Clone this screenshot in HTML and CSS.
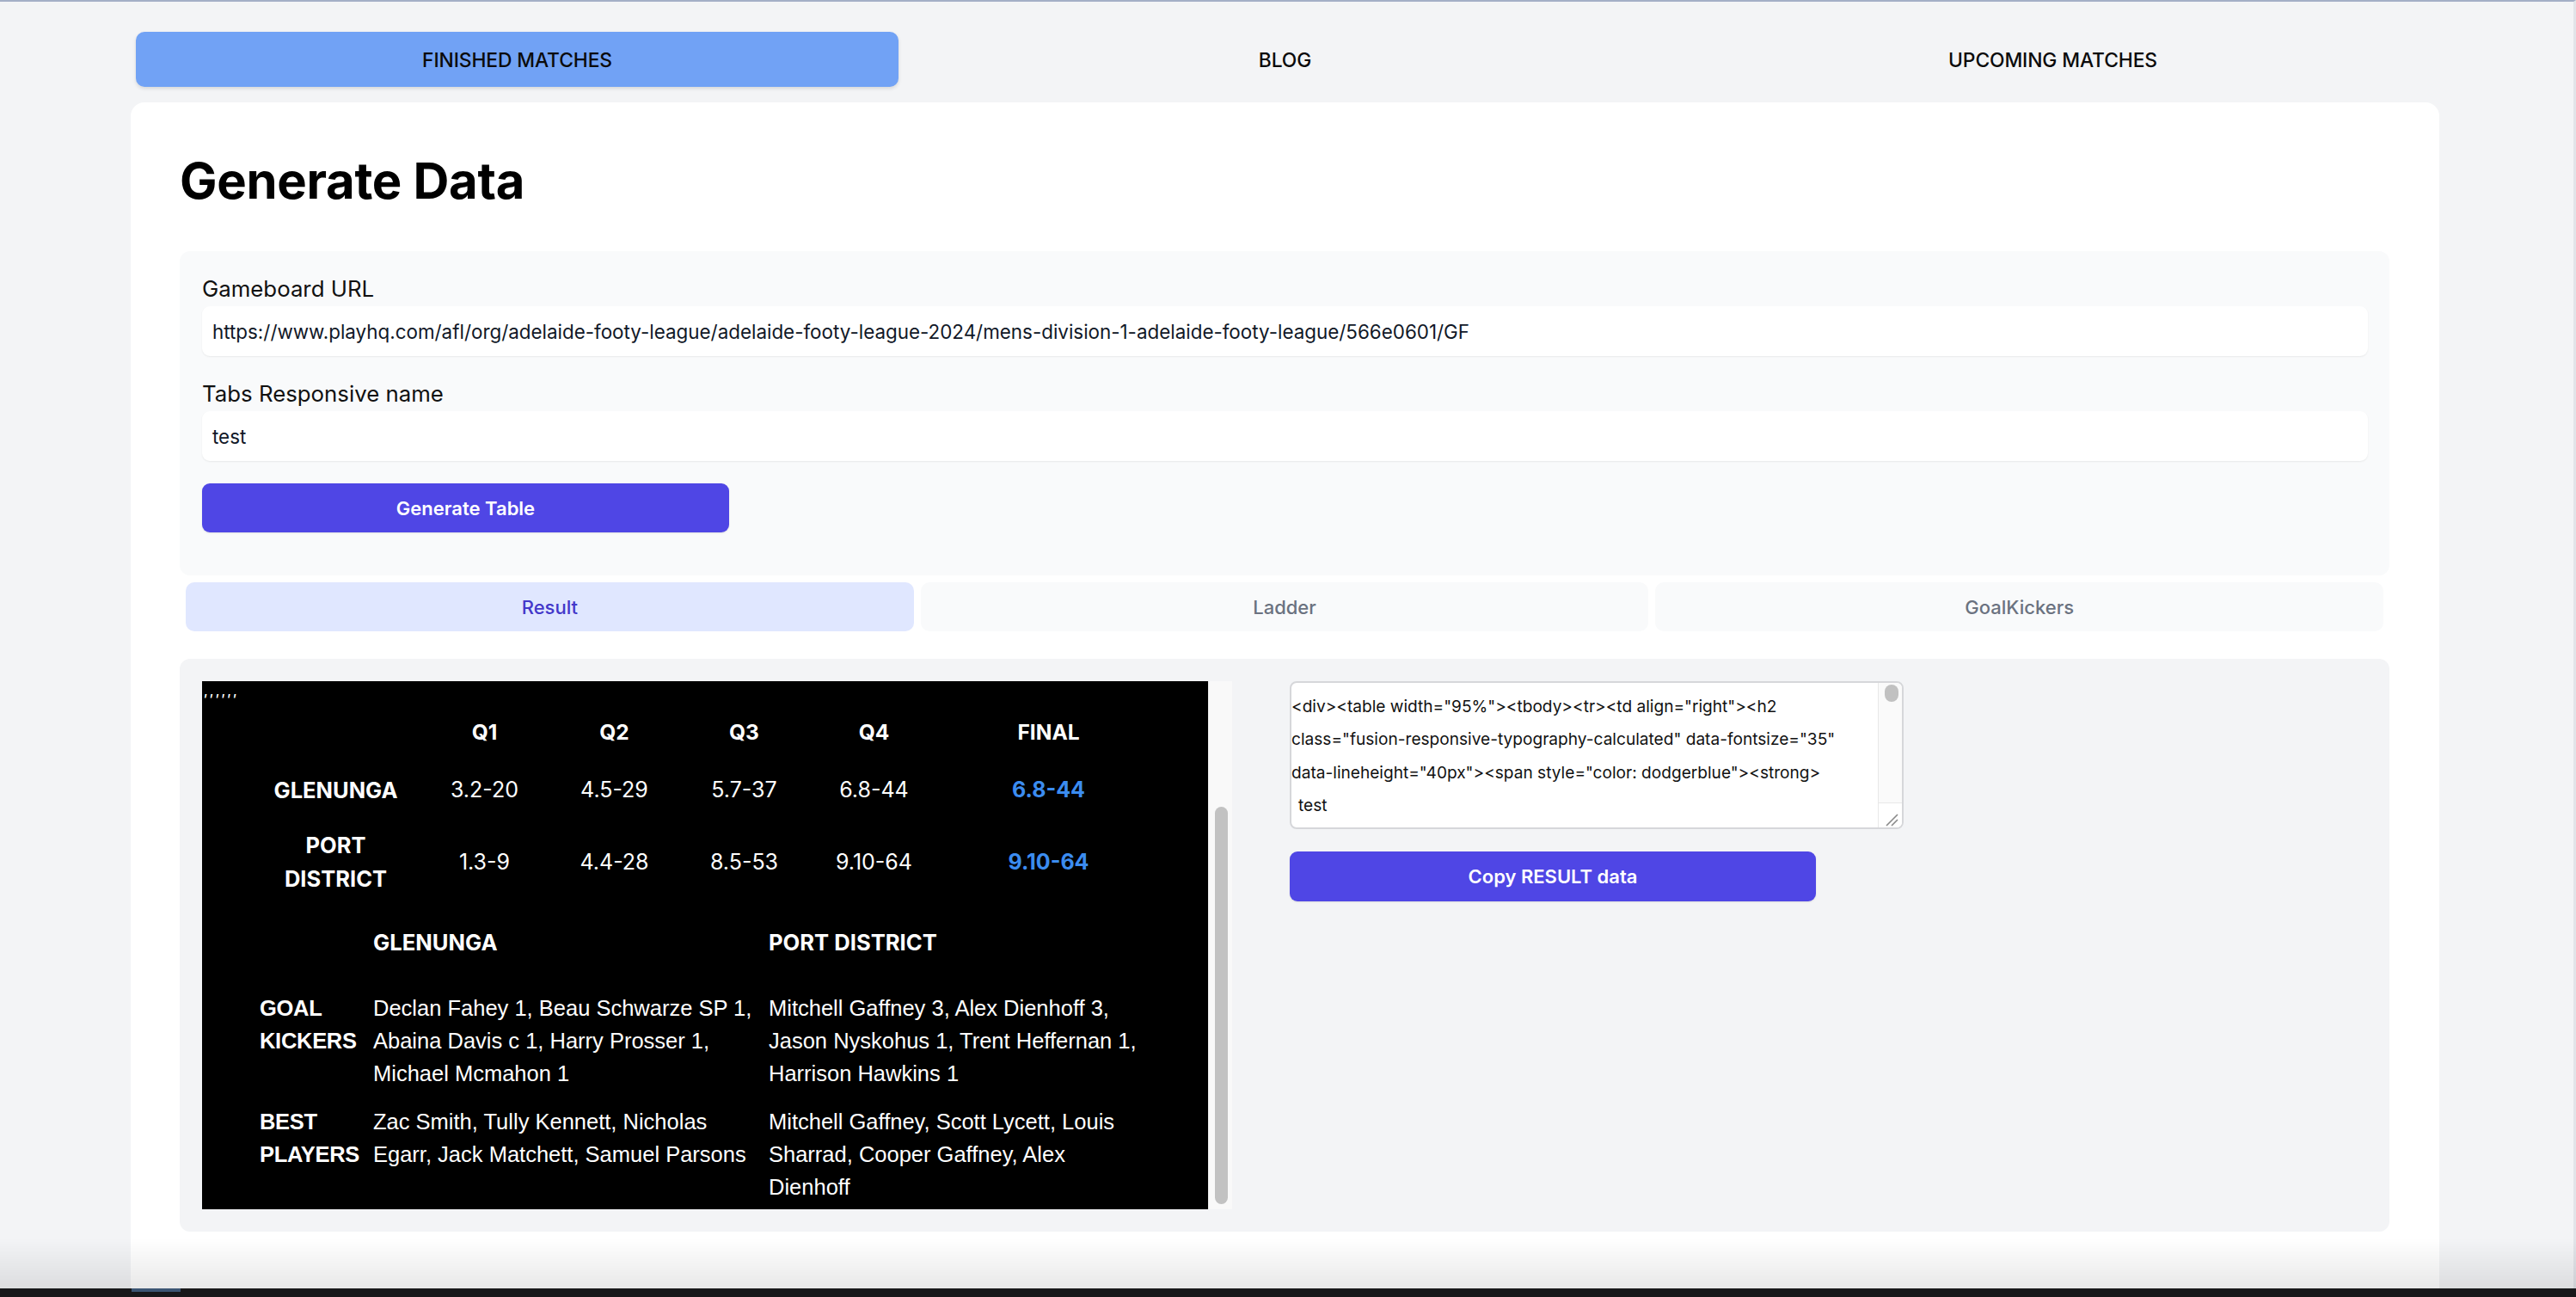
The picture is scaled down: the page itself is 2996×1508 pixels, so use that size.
FILE: index.html
```html
<!DOCTYPE html>
<html lang="en">
<head>
<meta charset="utf-8">
<title>Generate Data</title>
<link rel="stylesheet" href="styles.css">
</head>
<body>
<div class="page">
  <nav class="nav">
    <a class="nav-item nav-active">FINISHED MATCHES</a>
    <a class="nav-item">BLOG</a>
    <a class="nav-item">UPCOMING MATCHES</a>
  </nav>

  <main class="card">
    <h1 class="title">Generate Data</h1>

    <section class="form-panel">
      <label class="label">Gameboard URL</label>
      <div class="input">https://www.playhq.com/afl/org/adelaide-footy-league/adelaide-footy-league-2024/mens-division-1-adelaide-footy-league/566e0601/GF</div>
      <label class="label label-second">Tabs Responsive name</label>
      <div class="input">test</div>
      <button class="btn btn-generate">Generate Table</button>
    </section>

    <div class="tabs">
      <div class="tab tab-active">Result</div>
      <div class="tab">Ladder</div>
      <div class="tab">GoalKickers</div>
    </div>

    <section class="result-panel">
      <div class="preview-col">
        <div class="preview-wrap">
          <div class="preview">
            <div class="quotes">''''''</div>
            <table class="scores">
              <colgroup>
                <col class="c-team"><col class="c-q"><col class="c-q"><col class="c-q"><col class="c-q"><col class="c-final">
              </colgroup>
              <tr class="row-head">
                <th></th><th>Q1</th><th>Q2</th><th>Q3</th><th>Q4</th><th>FINAL</th>
              </tr>
              <tr class="row-one">
                <td class="team">GLENUNGA</td><td>3.2-20</td><td>4.5-29</td><td>5.7-37</td><td>6.8-44</td><td class="final">6.8-44</td>
              </tr>
              <tr class="row-two">
                <td class="team">PORT<br>DISTRICT</td><td>1.3-9</td><td>4.4-28</td><td>8.5-53</td><td>9.10-64</td><td class="final">9.10-64</td>
              </tr>
            </table>
            <div class="scorers">
              <div class="sub"></div>
              <div class="sub">GLENUNGA</div>
              <div class="sub">PORT DISTRICT</div>

              <div class="lbl">GOAL<br>KICKERS</div>
              <div class="names names-home">Declan Fahey 1, Beau Schwarze SP 1, Abaina Davis c 1, Harry Prosser 1, Michael Mcmahon 1</div>
              <div class="names">Mitchell Gaffney 3, Alex Dienhoff 3, Jason Nyskohus 1, Trent Heffernan 1, Harrison Hawkins 1</div>

              <div class="lbl">BEST<br>PLAYERS</div>
              <div class="names names-home">Zac Smith, Tully Kennett, Nicholas Egarr, Jack Matchett, Samuel Parsons</div>
              <div class="names">Mitchell Gaffney, Scott Lycett, Louis Sharrad, Cooper Gaffney, Alex Dienhoff</div>
            </div>
          </div>
          <div class="vscroll"><div class="vthumb"></div></div>
        </div>
      </div>

      <div class="code-col">
        <div class="code-box">
          <div class="code-text"><span class="code-line">&lt;div&gt;&lt;table width="95%"&gt;&lt;tbody&gt;&lt;tr&gt;&lt;td align="right"&gt;&lt;h2</span><span class="code-line">class="fusion-responsive-typography-calculated" data-fontsize="35"</span><span class="code-line">data-lineheight="40px"&gt;&lt;span style="color: dodgerblue"&gt;&lt;strong&gt;</span><span class="code-line code-indent">test</span></div>
          <div class="code-scroll">
            <div class="code-thumb"></div>
            <div class="code-fill"></div>
            <div class="code-resize">
              <svg width="26" height="28" viewBox="0 0 26 28"><path d="M9 26 L22 13 M15 26 L22 19" stroke="#8a8a8a" stroke-width="1.6" fill="none"/></svg>
            </div>
          </div>
        </div>
        <button class="btn btn-copy">Copy RESULT data</button>
      </div>
    </section>
  </main>
</div>
<div class="window-shade"></div>
<div class="window-bar"><div class="window-bar-tab"></div></div>
</body>
</html>
```

FILE: styles.css
```css
* { box-sizing: border-box; }

html, body {
  margin: 0;
  padding: 0;
  height: 100%;
  overflow: hidden;
}

body {
  background: #f3f4f6;
  font-family: Inter, "Noto Sans", sans-serif;
  color: #111;
  border-top: 2px solid #a4afc7;
  border-right: 3px solid #e2e4e9;
}

.page {
  padding: 35px 156px 0 152px;
}

/* NAV */
.nav {
  display: grid;
  grid-template-columns: repeat(3, 1fr);
  gap: 6px;
  margin: 0 6px;
}

.nav-item {
  height: 64px;
  display: flex;
  align-items: center;
  justify-content: center;
  font-size: 22.8px;
  font-weight: 500;
  color: #0b0b0b;
  border-radius: 10px;
  letter-spacing: -0.1px;
}

.nav-active {
  background: #71a2f5;
  box-shadow: 0 2px 4px rgba(0, 0, 0, 0.12);
}

/* CARD */
.card {
  margin-top: 18px;
  background: #fff;
  border-radius: 16px 16px 0 0;
  padding: 57px 58px 200px 57px;
}

.title {
  margin: 0;
  font-size: 58px;
  line-height: 68px;
  font-weight: 700;
  color: #000;
  letter-spacing: -0.3px;
}

/* FORM */
.form-panel {
  margin-top: 48px;
  background: #f9fafb;
  border-radius: 12px;
  padding: 26px 25px 50px 26px;
  display: flex;
  flex-direction: column;
  align-items: stretch;
}

.label {
  display: block;
  font-size: 25.8px;
  line-height: 36px;
  color: #111;
  margin-bottom: 2px;
}

.label-second {
  margin-top: 26px;
}

.input {
  height: 58px;
  background: #fff;
  border-radius: 9px;
  box-shadow: 0 1px 2px rgba(0, 0, 0, 0.07);
  display: flex;
  align-items: center;
  padding: 0 12px;
  font-size: 22.4px;
  color: #111827;
  white-space: nowrap;
  overflow: hidden;
}

.btn {
  border: none;
  background: #4f46e5;
  color: #fff;
  font-family: Inter, "Noto Sans", sans-serif;
  font-size: 22px;
  font-weight: 600;
  border-radius: 9px;
  box-shadow: 0 1px 2px rgba(0, 0, 0, 0.1);
}

.btn-generate {
  margin-top: 26px;
  width: 613px;
  height: 57px;
}

/* TABS */
.tabs {
  display: grid;
  grid-template-columns: repeat(3, 1fr);
  gap: 8px;
  padding: 8px 7px;
  margin-bottom: 24px;
}

.tab {
  height: 57px;
  display: flex;
  align-items: center;
  justify-content: center;
  background: #f9fafb;
  color: #6b7280;
  font-size: 22px;
  font-weight: 500;
  border-radius: 10px;
}

.tab-active {
  background: #e0e7ff;
  color: #4338ca;
}

/* RESULT */
.result-panel {
  background: #f3f4f6;
  border-radius: 12px;
  padding: 26px;
  display: grid;
  grid-template-columns: 1253px 1253px;
  column-gap: 12px;
  align-items: start;
}

.preview-wrap {
  display: flex;
  width: 1198px;
  height: 614px;
}

.preview {
  width: 1170px;
  height: 614px;
  background: #000;
  color: #fff;
  overflow: hidden;
}

.quotes {
  height: 36px;
  padding-top: 4px;
  font-family: "Liberation Sans", Arial, sans-serif;
  font-style: italic;
  font-size: 20px;
  line-height: 36px;
  letter-spacing: 3px;
  padding-left: 1px;
}

.scores {
  width: 1054px;
  margin: 0 auto;
  border-collapse: collapse;
  table-layout: fixed;
  font-family: Inter, "Noto Sans", sans-serif;
  font-size: 25px;
}

.c-team { width: 195px; }
.c-q { width: 151px; }
.c-final { width: 255px; }

.scores th,
.scores td {
  padding: 0;
  text-align: center;
  vertical-align: middle;
}

.scores th {
  font-size: 24.5px;
  font-weight: 700;
}

.row-head { height: 46px; }
.row-one { height: 89px; }
.row-two { height: 78px; }

.scores td { line-height: 39px; }

.team {
  font-weight: 700;
  font-size: 25.5px;
}

.final {
  color: #3b8cf0;
  font-weight: 700;
}

.scorers {
  margin: 14px 0 0 67px;
  display: grid;
  grid-template-columns: 132px 460px 436px;
  row-gap: 18px;
}

.sub {
  height: 80px;
  display: flex;
  align-items: center;
  font-family: Inter, "Noto Sans", sans-serif;
  font-size: 25.6px;
  font-weight: 700;
}

.lbl,
.names {
  font-family: "Liberation Sans", Arial, sans-serif;
  font-size: 25.5px;
  line-height: 38px;
}

.lbl {
  font-weight: 700;
  letter-spacing: -0.3px;
}

.names-home { padding-right: 10px; }

.vscroll {
  width: 28px;
  height: 614px;
  background: #f9f9f9;
  border-left: 1px solid #ececec;
  padding: 146px 0 0 7px;
}

.vthumb {
  width: 15px;
  height: 462px;
  border-radius: 8px;
  background: #c2c2c2;
}

/* CODE */
.code-col {
  display: flex;
  flex-direction: column;
  align-items: flex-start;
}

.code-box {
  width: 714px;
  height: 172px;
  background: #fff;
  border: 2px solid #d6d7da;
  border-radius: 8px;
  display: flex;
  overflow: hidden;
}

.code-text {
  flex: 1;
  padding-top: 8px;
  font-family: Inter, "Noto Sans", sans-serif;
  font-size: 19.1px;
  line-height: 38.3px;
  color: #111;
  white-space: nowrap;
  overflow: hidden;
}

.code-line { display: block; }

.code-indent { padding-left: 8px; }

.code-scroll {
  width: 28px;
  display: flex;
  flex-direction: column;
  background: #fafafa;
  border-left: 1px solid #e8e8e8;
}

.code-thumb {
  width: 16px;
  height: 20px;
  margin: 2px 0 0 7px;
  border-radius: 8px;
  background: #c1c1c1;
}

.code-fill { flex: 1; }

.code-resize {
  height: 29px;
  border-top: 1px solid #e8e8e8;
  background: #fff;
}

.code-resize svg { display: block; }

.btn-copy {
  margin-top: 26px;
  width: 612px;
  height: 58px;
}

/* WINDOW EDGE */
.window-shade {
  position: fixed;
  left: 0;
  right: 0;
  bottom: 10px;
  height: 58px;
  background: linear-gradient(to bottom, rgba(0, 0, 0, 0), rgba(0, 0, 0, 0.09));
  pointer-events: none;
}

.window-bar {
  position: fixed;
  left: 0;
  right: 0;
  bottom: 0;
  height: 10px;
  background: #18181a;
}

.window-bar-tab {
  margin-left: 153px;
  width: 57px;
  height: 4px;
  background: #3c5573;
}
```
